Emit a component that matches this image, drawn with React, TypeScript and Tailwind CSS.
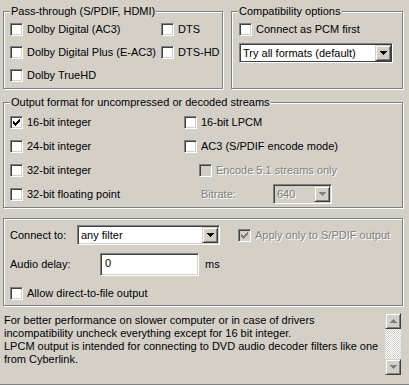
import React from "react";

const sunken =
  "border border-t-[#808080] border-l-[#808080] border-b-white border-r-white shadow-[inset_1px_1px_0_#404040,inset_-1px_-1px_0_#d4d0c8]";
const raised =
  "border border-t-[#d4d0c8] border-l-[#d4d0c8] border-b-[#404040] border-r-[#404040] shadow-[inset_1px_1px_0_#fff,inset_-1px_-1px_0_#808080]";
const etched = "border border-[#808080] shadow-[1px_1px_0_#fff,inset_1px_1px_0_#fff]";
const dim = "text-[#808080] [text-shadow:1px_1px_0_#fff]";

function Check({ on, off }: { on?: boolean; off?: boolean }) {
  return (
    <span className={`relative w-[13px] h-[13px] shrink-0 ${sunken} ${off ? "bg-[#d4d0c8]" : "bg-white"}`}>
      {on && (
        <svg width="7" height="7" className="absolute left-[2px] top-[2px]" shapeRendering="crispEdges">
          <g fill={off ? "#808080" : "#000"}>
            <rect x="0" y="2" width="1" height="3" />
            <rect x="1" y="3" width="1" height="3" />
            <rect x="2" y="4" width="1" height="3" />
            <rect x="3" y="3" width="1" height="3" />
            <rect x="4" y="2" width="1" height="3" />
            <rect x="5" y="1" width="1" height="3" />
            <rect x="6" y="0" width="1" height="3" />
          </g>
        </svg>
      )}
    </span>
  );
}

function Item({ label, on, off, className = "" }: { label: string; on?: boolean; off?: boolean; className?: string }) {
  return (
    <div className={`flex items-center gap-[4px] ${className}`}>
      <Check on={on} off={off} />
      <span className={off ? dim : ""}>{label}</span>
    </div>
  );
}

function Arrow({ up, off }: { up?: boolean; off?: boolean }) {
  return (
    <svg width="7" height="4" shapeRendering="crispEdges" className={up ? "rotate-180" : ""}>
      <g fill={off ? "#808080" : "#000"}>
        <rect x="0" y="0" width="7" height="1" />
        <rect x="1" y="1" width="5" height="1" />
        <rect x="2" y="2" width="3" height="1" />
        <rect x="3" y="3" width="1" height="1" />
      </g>
    </svg>
  );
}

function Combo({ value, off, className = "" }: { value: string; off?: boolean; className?: string }) {
  return (
    <div className={`flex p-[1px] ${sunken} ${off ? "bg-[#d4d0c8]" : "bg-white"} ${className}`}>
      <span className={`flex-1 flex items-center pl-[2px] ${off ? dim : ""}`}>{value}</span>
      <span className={`w-[16px] flex items-center justify-center bg-[#d4d0c8] ${raised}`}>
        <Arrow off={off} />
      </span>
    </div>
  );
}

function Group({ title, className = "", children }: { title?: string; className?: string; children: React.ReactNode }) {
  return (
    <div className={`relative ${etched} ${className}`}>
      {title && (
        <span className="absolute left-[6px] top-[-8px] px-[1px] bg-[#d4d0c8] leading-[14px]">{title}</span>
      )}
      {children}
    </div>
  );
}

export default function App() {
  return (
    <div className="w-[409px] h-[385px] overflow-hidden bg-[#d4d0c8] text-black text-[11px] leading-[13px] font-['Tahoma','Liberation_Sans',sans-serif] pl-[3px] pr-[6px] pt-[11px]">
      <div className="flex gap-[8px]">
        <Group title="Pass-through (S/PDIF, HDMI)" className="w-[220px] h-[78px]">
          <div className="grid grid-cols-[151px_1fr] auto-rows-[23px] pl-[6px] pt-[6px]">
            <Item label="Dolby Digital (AC3)" />
            <Item label="DTS" />
            <Item label="Dolby Digital Plus (E-AC3)" />
            <Item label="DTS-HD" />
            <Item label="Dolby TrueHD" />
          </div>
        </Group>
        <Group title="Compatibility options" className="flex-1 h-[78px]">
          <div className="flex flex-col pl-[7px] pt-[6px] pr-[7px]">
            <Item label="Connect as PCM first" className="h-[23px]" />
            <Combo value="Try all formats (default)" className="mt-[2px] h-[20px] w-[154px] ring-1 ring-[#404040] ring-inset" />
          </div>
        </Group>
      </div>

      <Group title="Output format for uncompressed or decoded streams" className="mt-[13px] h-[106px]">
        <div className="grid grid-cols-[174px_1fr] auto-rows-[24px] pl-[6px] pt-[7px]">
          <Item label="16-bit integer" on />
          <Item label="16-bit LPCM" />
          <Item label="24-bit integer" />
          <Item label="AC3 (S/PDIF encode mode)" />
          <Item label="32-bit integer" />
          <Item label="Encode 5.1 streams only" off className="pl-[15px]" />
          <Item label="32-bit floating point" />
          <div className="flex items-center pl-[17px]">
            <span className={`w-[72px] ${dim}`}>Bitrate:</span>
            <Combo value="640" off className="h-[20px] w-[59px]" />
          </div>
        </div>
      </Group>

      <div className={`mt-[10px] h-[88px] ${etched} pl-[6px] pt-[6px]`}>
        <div className="flex items-center h-[20px]">
          <span className="w-[67px]">Connect to:</span>
          <Combo value="any filter" className="h-[20px] w-[143px]" />
          <Item label="Apply only to S/PDIF output" on off className="ml-[18px]" />
        </div>
        <div className="flex items-center h-[23px] mt-[8px]">
          <span className="w-[90px]">Audio delay:</span>
          <div className={`w-[99px] h-[23px] bg-white pl-[4px] pt-[3px] ${sunken}`}>0</div>
          <span className="ml-[6px]">ms</span>
        </div>
        <Item label="Allow direct-to-file output" className="mt-[11px]" />
      </div>

      <div className="flex mt-[7px] h-[64px]">
        <p className="flex-1 pl-[1px] pt-[1px]">
          For better performance on slower computer or in case of drivers
          <br />
          incompatibility uncheck everything except for 16 bit integer.
          <br />
          LPCM output is intended for connecting to DVD audio decoder filters like one
          <br />
          from Cyberlink.
        </p>
        <div className="w-[16px] h-[62px] flex flex-col mr-[2px]">
          <span className={`h-[16px] flex items-center justify-center bg-[#d4d0c8] ${raised}`}>
            <Arrow up off />
          </span>
          <span className="flex-1 bg-[conic-gradient(#fff_25%,#d4d0c8_0_50%,#fff_0_75%,#d4d0c8_0)] bg-[length:2px_2px]" />
          <span className={`h-[16px] flex items-center justify-center bg-[#d4d0c8] ${raised}`}>
            <Arrow off />
          </span>
        </div>
      </div>
      <div className="h-[1px] bg-[#808080] mt-[7px] -ml-[3px] -mr-[6px]" />
    </div>
  );
}
